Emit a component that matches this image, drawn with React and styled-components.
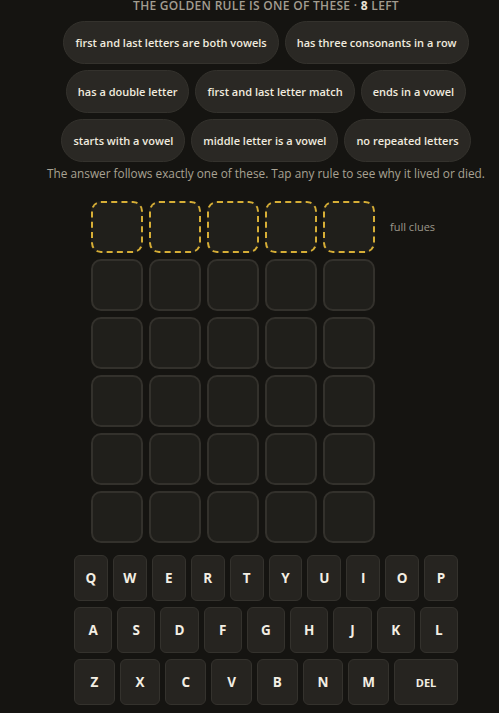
import React from "react";
import styled, { createGlobalStyle } from "styled-components";

const Global = createGlobalStyle`
  html, body { margin: 0; padding: 0; background: #151411; overflow: hidden; }
  body { font-family: "Open Sans", "Noto Sans", sans-serif; color: #ece6da; }
`;

const Page = styled.div`
  box-sizing: border-box;
  width: 499px;
  padding-left: 33px;
  display: flex;
  flex-direction: column;
  align-items: center;
`;

const Header = styled.div`
  font-size: 12px;
  font-weight: 600;
  letter-spacing: 0.3px;
  line-height: 12px;
  color: #a39d90;
  text-transform: uppercase;
  b { color: #e8e2d4; font-weight: 700; }
`;

const ChipRows = styled.div`
  margin-top: 9px;
  display: flex;
  flex-direction: column;
  align-items: center;
  gap: 6px;
`;

const ChipRow = styled.div`
  display: flex;
  gap: 6px;
`;

const Chip = styled.button`
  font-family: inherit;
  height: 43px;
  padding: 0 11px;
  border-radius: 22px;
  border: 1px solid #34322d;
  background: #2a2824;
  color: #f0ebdf;
  font-size: 11px;
  font-weight: 600;
  white-space: nowrap;
  cursor: pointer;
`;

const Note = styled.div`
  margin-top: 2px;
  font-size: 11.8px;
  line-height: 18px;
  color: #a8a293;
  white-space: nowrap;
`;

const BoardRow = styled.div`
  margin-top: 19px;
  display: flex;
  align-items: flex-start;
`;

const Grid = styled.div`
  display: grid;
  grid-template-columns: repeat(5, 52px);
  grid-auto-rows: 52px;
  gap: 6px;
`;

const Tile = styled.div`
  box-sizing: border-box;
  border-radius: 10px;
  background: #201f1b;
  border: 2px ${(p) => (p.$active ? "dashed #d6ae36" : "solid #33312c")};
`;

const Side = styled.div`
  width: 51px;
  margin-left: 15px;
  height: 50px;
  display: flex;
  align-items: center;
  font-size: 11px;
  color: #9c978a;
  white-space: nowrap;
`;

const Keyboard = styled.div`
  margin-top: 12px;
  width: 384px;
  display: flex;
  flex-direction: column;
  gap: 6px;
`;

const KeyRow = styled.div`
  display: flex;
  gap: 5px;
`;

const Key = styled.button`
  font-family: inherit;
  flex: ${(p) => p.$grow || 1} 1 0;
  min-width: 0;
  height: 46px;
  padding: 0;
  border-radius: 6px;
  border: 1px solid #34322d;
  background: #262420;
  color: #f3eee3;
  font-size: ${(p) => (p.$small ? "11px" : "13.5px")};
  font-weight: 700;
  cursor: pointer;
`;

const chipRows = [
  ["first and last letters are both vowels", "has three consonants in a row"],
  ["has a double letter", "first and last letter match", "ends in a vowel"],
  ["starts with a vowel", "middle letter is a vowel", "no repeated letters"],
];

const keys = ["QWERTYUIOP", "ASDFGHJKL", "ZXCVBNM"];

export default function App() {
  return (
    <Page>
      <Global />
      <Header>
        The golden rule is one of these · <b>8</b> left
      </Header>
      <ChipRows>
        {chipRows.map((row, i) => (
          <ChipRow key={i}>
            {row.map((c) => (
              <Chip key={c}>{c}</Chip>
            ))}
          </ChipRow>
        ))}
      </ChipRows>
      <Note>
        The answer follows exactly one of these. Tap any rule to see why it lived or died.
      </Note>
      <BoardRow>
        <Grid>
          {Array.from({ length: 30 }).map((_, i) => (
            <Tile key={i} $active={i < 5} />
          ))}
        </Grid>
        <Side>full clues</Side>
      </BoardRow>
      <Keyboard>
        {keys.map((row, i) => (
          <KeyRow key={i}>
            {row.split("").map((k) => (
              <Key key={k}>{k}</Key>
            ))}
            {i === 2 && (
              <Key $grow={1.6} $small>
                DEL
              </Key>
            )}
          </KeyRow>
        ))}
      </Keyboard>
    </Page>
  );
}
